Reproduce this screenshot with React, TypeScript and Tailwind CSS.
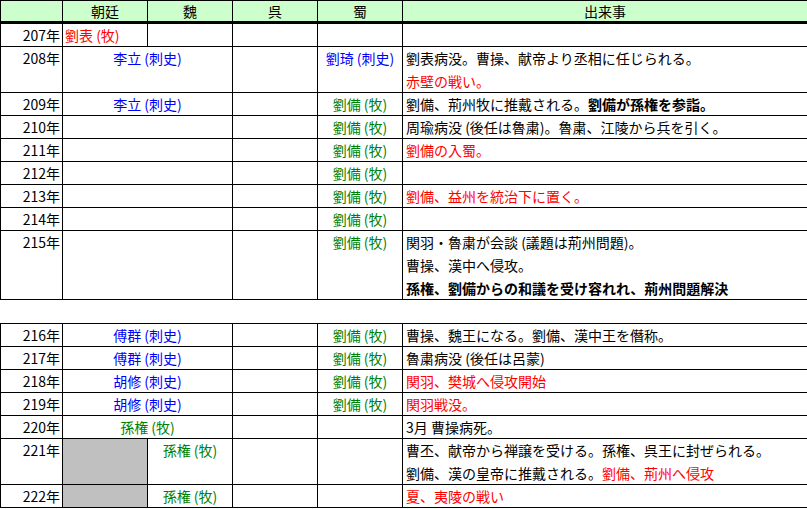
const R = "text-[#ff0000]";
const B = "text-[#0000ff]";
const G = "text-[#008000]";

type Row = {
  y: string;
  h: string;
  court?: [string, string];
  courtSpan?: boolean;
  wei?: [string, string];
  grey?: boolean;
  shu?: [string, string];
  ev: [string, string][][];
};

const top: Row[] = [
  { y: "207年", h: "h-[22px]", court: ["劉表 (牧)", R], courtSpan: false, ev: [[]] },
  { y: "208年", h: "h-[45px]", court: ["李立 (刺史)", B], courtSpan: true, shu: ["劉琦 (刺史)", B], ev: [[["劉表病没。曹操、献帝より丞相に任じられる。", ""]], [["赤壁の戦い。", R]]] },
  { y: "209年", h: "h-[22px]", court: ["李立 (刺史)", B], courtSpan: true, shu: ["劉備 (牧)", G], ev: [[["劉備、荊州牧に推戴される。", ""], ["劉備が孫権を参詣。", "font-bold"]]] },
  { y: "210年", h: "h-[22px]", courtSpan: true, shu: ["劉備 (牧)", G], ev: [[["周瑜病没 (後任は魯粛)。魯粛、江陵から兵を引く。", ""]]] },
  { y: "211年", h: "h-[22px]", courtSpan: true, shu: ["劉備 (牧)", G], ev: [[["劉備の入蜀。", R]]] },
  { y: "212年", h: "h-[22px]", courtSpan: true, shu: ["劉備 (牧)", G], ev: [[]] },
  { y: "213年", h: "h-[22px]", courtSpan: true, shu: ["劉備 (牧)", G], ev: [[["劉備、益州を統治下に置く。", R]]] },
  { y: "214年", h: "h-[22px]", courtSpan: true, shu: ["劉備 (牧)", G], ev: [[]] },
  { y: "215年", h: "h-[68px]", courtSpan: true, shu: ["劉備 (牧)", G], ev: [[["関羽・魯粛が会談 (議題は荊州問題)。", ""]], [["曹操、漢中へ侵攻。", ""]], [["孫権、劉備からの和議を受け容れれ、荊州問題解決", "font-bold"]]] },
];

const bottom: Row[] = [
  { y: "216年", h: "h-[22px]", court: ["傅群 (刺史)", B], courtSpan: true, shu: ["劉備 (牧)", G], ev: [[["曹操、魏王になる。劉備、漢中王を僭称。", ""]]] },
  { y: "217年", h: "h-[22px]", court: ["傅群 (刺史)", B], courtSpan: true, shu: ["劉備 (牧)", G], ev: [[["魯粛病没 (後任は呂蒙)", ""]]] },
  { y: "218年", h: "h-[22px]", court: ["胡修 (刺史)", B], courtSpan: true, shu: ["劉備 (牧)", G], ev: [[["関羽、樊城へ侵攻開始", R]]] },
  { y: "219年", h: "h-[22px]", court: ["胡修 (刺史)", B], courtSpan: true, shu: ["劉備 (牧)", G], ev: [[["関羽戦没。", R]]] },
  { y: "220年", h: "h-[22px]", court: ["孫権 (牧)", G], courtSpan: true, ev: [[["3月 曹操病死。", ""]]] },
  { y: "221年", h: "h-[45px]", grey: true, wei: ["孫権 (牧)", G], ev: [[["曹丕、献帝から禅譲を受ける。孫権、呉王に封ぜられる。", ""]], [["劉備、漢の皇帝に推戴される。", ""], ["劉備、荊州へ侵攻", R]]] },
  { y: "222年", h: "h-[22px]", grey: true, wei: ["孫権 (牧)", G], ev: [[["夏、夷陵の戦い", R]]] },
];

const td = "border border-black p-0 align-top leading-[22px] overflow-hidden";

function Body({ rows }: { rows: Row[] }) {
  return (
    <>
      {rows.map((r) => (
        <tr key={r.y} className={r.h}>
          <td className={`${td} text-right pr-[2px]`}>{r.y}</td>
          {r.courtSpan ? (
            <td colSpan={2} className={`${td} text-center ${r.court?.[1] ?? ""}`}>{r.court?.[0]}</td>
          ) : r.grey ? (
            <>
              <td className={`${td} bg-[#c0c0c0]`}></td>
              <td className={`${td} text-center ${r.wei?.[1]}`}>{r.wei?.[0]}</td>
            </>
          ) : (
            <>
              <td className={`${td} pl-[2px] ${r.court?.[1] ?? ""}`}>{r.court?.[0]}</td>
              <td className={td}></td>
            </>
          )}
          <td className={td}></td>
          <td className={`${td} text-center ${r.shu?.[1] ?? ""}`}>{r.shu?.[0]}</td>
          <td className={`${td} pl-[3px]`}>
            {r.ev.map((line, i) => (
              <div key={i} className="h-[23px] last:h-[22px] whitespace-nowrap">
                {line.map(([t, c], j) => (
                  <span key={j} className={c}>{t}</span>
                ))}
              </div>
            ))}
          </td>
        </tr>
      ))}
    </>
  );
}

function Cols() {
  return (
    <colgroup>
      <col className="w-[62px]" />
      <col className="w-[85px]" />
      <col className="w-[85px]" />
      <col className="w-[85px]" />
      <col className="w-[85px]" />
      <col className="w-[405px]" />
    </colgroup>
  );
}

export default function App() {
  return (
    <div className="w-[807px] h-[509px] bg-white text-[14px] text-black overflow-hidden" style={{ fontFamily: '"Noto Sans CJK JP", "Noto Sans", sans-serif' }}>
      <table className="table-fixed border-collapse w-[807px]">
        <Cols />
        <thead>
          <tr className="h-[22px] bg-[#ccffcc]">
            {["", "朝廷", "魏", "呉", "蜀", "出来事"].map((h, i) => (
              <th key={i} className="border border-black border-b-[3px] border-b-black font-normal p-0 leading-[20px] text-center">{h}</th>
            ))}
          </tr>
        </thead>
        <tbody>
          <Body rows={top} />
        </tbody>
      </table>
      <table className="table-fixed border-collapse w-[807px] mt-[23px]">
        <Cols />
        <tbody>
          <Body rows={bottom} />
        </tbody>
      </table>
    </div>
  );
}
